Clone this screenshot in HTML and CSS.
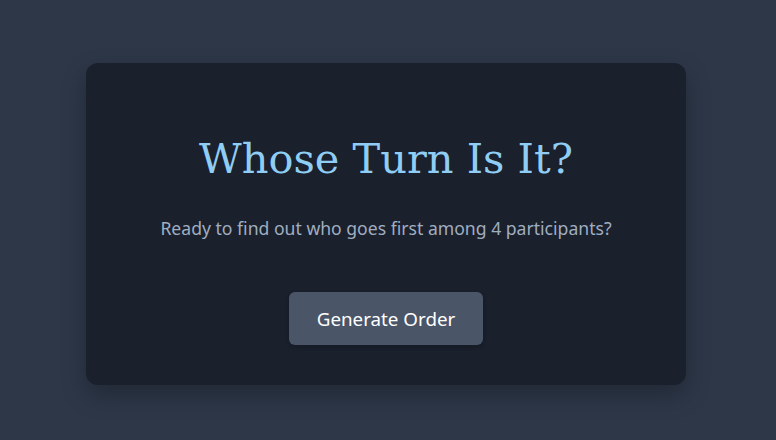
FILE: index.html
```html
<!DOCTYPE html>
<html lang="en">
<head>
<meta charset="utf-8">
<title>Whose Turn Is It?</title>
<link rel="stylesheet" href="styles.css">
</head>
<body>
<main class="page">
  <section class="card">
    <h1 class="title">Whose Turn Is It?</h1>
    <p class="subtitle">Ready to find out who goes first among 4 participants?</p>
    <button class="btn" type="button">Generate Order</button>
  </section>
</main>
</body>
</html>
```

FILE: styles.css
```css
html, body {
  margin: 0;
  padding: 0;
  height: 100%;
}
body {
  background: #2d3748;
  font-family: "Noto Sans", "Open Sans", sans-serif;
}
.page {
  min-height: 100vh;
  box-sizing: border-box;
  display: flex;
  align-items: center;
  justify-content: center;
  padding: 8px 4px 0 0;
}
.card {
  width: 600px;
  height: 322px;
  box-sizing: border-box;
  background: #1a202c;
  border-radius: 12px;
  box-shadow: 0 10px 25px rgba(0, 0, 0, 0.25);
  display: flex;
  flex-direction: column;
  align-items: center;
  padding-top: 68px;
}
.title {
  margin: 0;
  font-family: "DejaVu Serif", "Liberation Serif", serif;
  font-weight: 400;
  font-size: 41.5px;
  line-height: 56px;
  color: #90cdf4;
}
.subtitle {
  margin: 29px 0 0;
  font-size: 17.6px;
  line-height: 24px;
  color: #a0aec0;
}
.btn {
  margin-top: 52px;
  width: 194px;
  height: 53px;
  border: none;
  border-radius: 6px;
  background: #4a5568;
  color: #ffffff;
  font-family: "Noto Sans", "Open Sans", sans-serif;
  font-size: 18.8px;
  box-shadow: 0 2px 4px rgba(0, 0, 0, 0.2);
}
```
